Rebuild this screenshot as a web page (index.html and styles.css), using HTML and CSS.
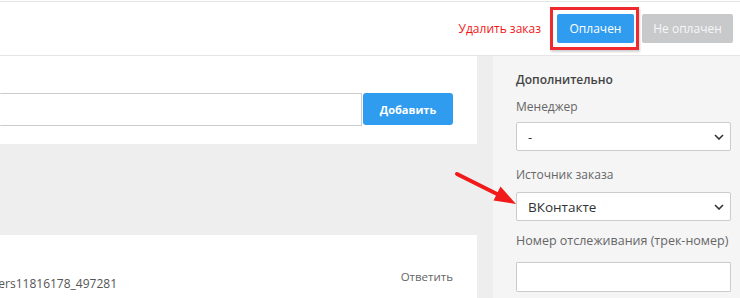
FILE: index.html
```html
<!DOCTYPE html>
<html lang="ru">
<head>
<meta charset="utf-8">
<title>Заказ</title>
<link rel="stylesheet" href="styles.css">
</head>
<body>
<div class="page">
  <header class="topbar">
    <a class="delete-link">Удалить заказ</a>
    <div class="btn-wrap">
      <button class="btn btn-paid">Оплачен</button>
      <span class="highlight"></span>
    </div>
    <button class="btn btn-unpaid">Не оплачен</button>
  </header>
  <main class="layout">
    <section class="content">
      <div class="card card-add">
        <div class="add-row">
          <input class="text-input wide" type="text">
          <button class="btn btn-add">Добавить</button>
        </div>
      </div>
      <div class="card card-msg">
        <div class="msg-row">
          <span class="msg-file">ders11816178_497281</span>
          <a class="reply-link">Ответить</a>
        </div>
      </div>
    </section>
    <aside class="sidebar">
      <h3 class="side-title">Дополнительно</h3>
      <label class="field-label">Менеджер</label>
      <div class="select">
        <span class="select-value">-</span>
        <svg class="chev" width="10" height="6" viewBox="0 0 10 6"><path d="M1 1 L5 5 L9 1" fill="none" stroke="#333" stroke-width="1.6"/></svg>
      </div>
      <label class="field-label l2">Источник заказа</label>
      <div class="select">
        <span class="select-value big">ВКонтакте</span>
        <svg class="chev" width="10" height="6" viewBox="0 0 10 6"><path d="M1 1 L5 5 L9 1" fill="none" stroke="#333" stroke-width="1.6"/></svg>
      </div>
      <label class="field-label l3">Номер отслеживания (трек-номер)</label>
      <input class="text-input side-input" type="text">
    </aside>
  </main>
  <svg class="arrow" width="740" height="298" viewBox="0 0 740 298">
    <line x1="457" y1="174" x2="499" y2="195" stroke="#f01a1a" stroke-width="4" stroke-linecap="round"/>
    <polygon points="516,204 493.5,200.5 500.5,186.5" fill="#f01a1a"/>
  </svg>
</div>
</body>
</html>
```

FILE: styles.css
```css
* { box-sizing: border-box; }
html, body { margin: 0; padding: 0; }
body {
  font-family: "Open Sans", "Noto Sans", sans-serif;
  background: #fff;
  width: 740px;
  height: 298px;
  overflow: hidden;
}
.page {
  position: relative;
  width: 740px;
  height: 298px;
  overflow: hidden;
  padding-top: 1px;
}
.topbar {
  height: 55px;
  border-top: 1px solid #e5e5e5;
  border-bottom: 1px solid #e5e5e5;
  display: flex;
  align-items: center;
  justify-content: flex-end;
  padding-right: 7px;
  background: #fff;
}
.delete-link {
  color: #f41616;
  font-size: 12px;
  margin-right: 16px;
}
.btn {
  font-family: inherit;
  border: none;
  border-radius: 2px;
  cursor: pointer;
}
.btn-wrap { position: relative; }
.btn-paid {
  display: block;
  width: 77px;
  height: 29px;
  background: #2f9cef;
  color: #fff;
  font-size: 12px;
}
.highlight {
  position: absolute;
  left: -7px;
  top: -7px;
  width: 89px;
  height: 43px;
  border: 3px solid #ee2a2f;
  box-shadow: 1px 2px 2px rgba(0,0,0,0.18);
}
.btn-unpaid {
  width: 91px;
  height: 29px;
  margin-left: 8px;
  background: #c8c9cb;
  color: #f7f7f7;
  font-size: 12px;
}
.layout {
  display: flex;
  gap: 16px;
  background: #eeeeee;
  height: 242px;
}
.content {
  width: 477px;
  display: flex;
  flex-direction: column;
}
.card { background: #fff; }
.card-add {
  height: 88px;
  padding: 37px 24px 0 0;
}
.add-row { display: flex; }
.text-input {
  height: 33px;
  border: 1px solid #cccccc;
  background: #fff;
  border-radius: 1px;
}
.text-input.wide {
  flex: 1;
  border-left: none;
}
.btn-add {
  width: 90px;
  height: 32px;
  margin-left: 1px;
  background: #2f9cef;
  color: #fff;
  font-size: 11px;
  font-weight: 700;
  border-radius: 3px;
}
.card-msg {
  margin-top: 91px;
  flex: 1;
  padding: 34px 24px 0 0;
  overflow: hidden;
}
.msg-row {
  display: flex;
  justify-content: space-between;
}
.msg-file {
  font-size: 12px;
  color: #555;
  margin-left: -9px;
  margin-top: 6px;
}
.reply-link {
  font-size: 11.5px;
  color: #666;
}
.sidebar {
  flex: 1;
  background: #f5f5f5;
  padding: 16px 9px 0 23px;
}
.side-title {
  margin: 0;
  font-size: 12px;
  line-height: 16px;
  font-weight: 600;
  color: #444;
}
.field-label {
  display: block;
  font-size: 12px;
  line-height: 18px;
  color: #666;
  margin-top: 10px;
  margin-bottom: 6px;
  white-space: nowrap;
}
.field-label.l2 { margin-top: 15px; margin-bottom: 8px; }
.field-label.l3 { margin-top: 11px; margin-bottom: 12px; font-size: 12.5px; }
.select {
  height: 29px;
  border: 1px solid #cccccc;
  border-radius: 2px;
  background: #fff;
  display: flex;
  align-items: center;
  justify-content: space-between;
  padding: 0 6px 0 11px;
}
.select-value {
  font-size: 13px;
  color: #333;
}
.select-value.big { font-size: 13.5px; }
.side-input {
  display: block;
  width: 100%;
  height: 30px;
}
.arrow {
  position: absolute;
  left: 0;
  top: 0;
  pointer-events: none;
}
```
